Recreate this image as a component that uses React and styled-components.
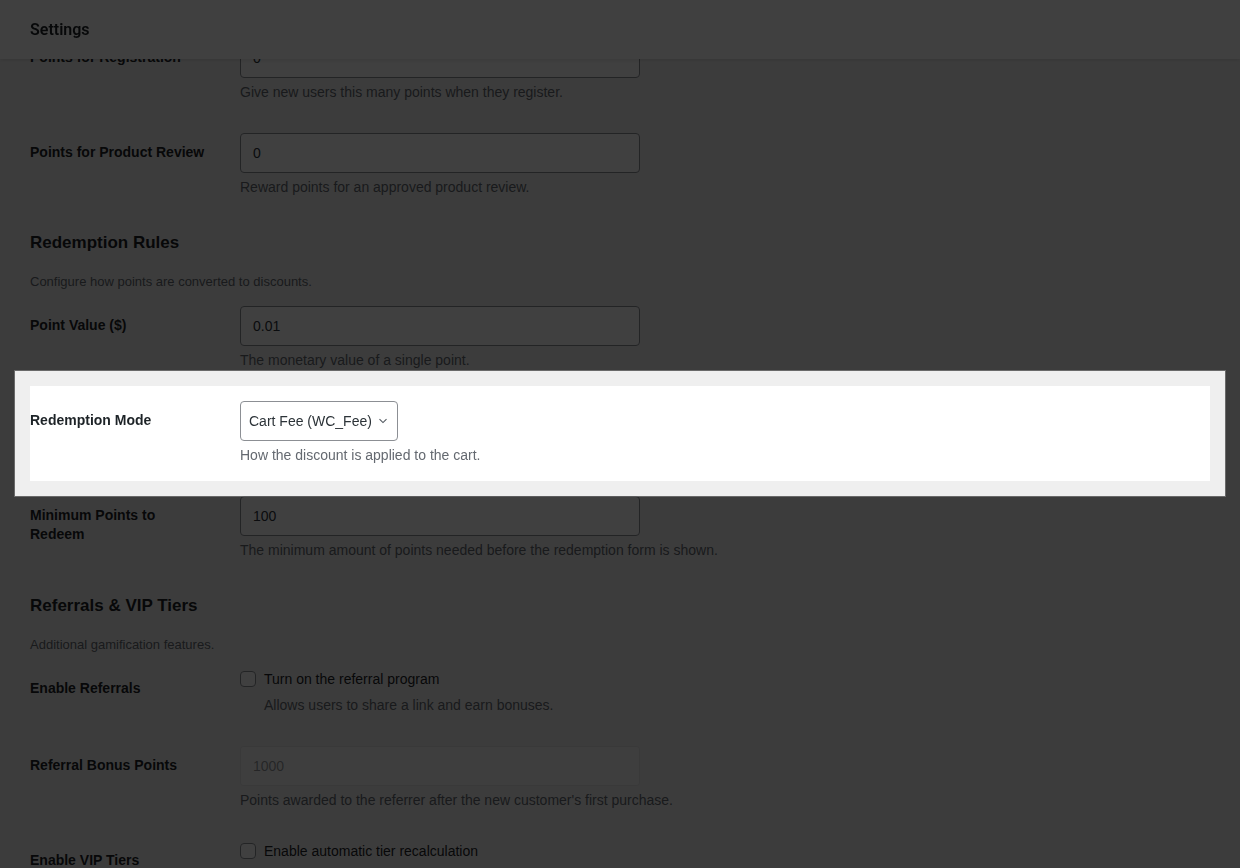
import styled, { createGlobalStyle } from 'styled-components'

const GlobalStyle = createGlobalStyle`
  html, body {
    margin: 0;
    padding: 0;
    overflow: hidden;
    background: #f0f0f0;
    font-family: "Liberation Sans", Arial, sans-serif;
    color: #1d2327;
  }
  * { box-sizing: border-box; }
`

const colors = {
  text: '#1d2327',
  input: '#2c3338',
  muted: '#646970',
  border: '#8c8f94',
}

const Header = styled.header`
  position: fixed;
  top: 0;
  left: 0;
  right: 0;
  z-index: 10;
  height: 59px;
  display: flex;
  align-items: center;
  padding: 0 30px;
  background: #fff;
  box-shadow: 0 1px 4px rgba(0, 0, 0, 0.12);
`

const HeaderTitle = styled.h1`
  margin: 0;
  font-family: Roboto, "Liberation Sans", sans-serif;
  font-size: 16px;
  font-weight: 600;
  color: ${colors.text};
`

const Main = styled.main`
  padding: 23px 30px 40px;
`

const Row = styled.div`
  display: grid;
  grid-template-columns: 210px 1fr;
  position: relative;
  ${({ $highlighted }) =>
    $highlighted &&
    `
    z-index: 20;
    background: #fff;
    box-shadow: 0 0 0 15px #efefef, 0 0 0 16px rgba(150, 150, 150, 0.5),
      0 0 0 9999px rgba(0, 0, 0, 0.75);
  `}
`

const Label = styled.div`
  padding-top: 25px;
  max-width: 178px;
  font-size: 14px;
  line-height: 19px;
  font-weight: 700;
  color: ${colors.text};
`

const Field = styled.div`
  padding: 15px 0;
`

const TextInput = styled.div`
  width: 400px;
  height: 40px;
  display: flex;
  align-items: center;
  padding: 0 12px;
  border: 1px solid ${({ $disabled }) => ($disabled ? 'rgba(220, 220, 222, 0.75)' : colors.border)};
  border-radius: 4px;
  background: ${({ $disabled }) => ($disabled ? 'rgba(255, 255, 255, 0.5)' : '#fff')};
  font-size: 14px;
  color: ${({ $disabled }) => ($disabled ? 'rgba(44, 51, 56, 0.5)' : colors.input)};
`

const SelectBox = styled.div`
  height: 40px;
  display: inline-flex;
  align-items: center;
  gap: 6px;
  padding: 0 9px 0 8px;
  border: 1px solid ${colors.border};
  border-radius: 4px;
  background: #fff;
  font-size: 14px;
  color: ${colors.input};
`

const Description = styled.p`
  margin: ${({ $gap }) => $gap || 4}px 0 0;
  padding-left: ${({ $indent }) => ($indent ? 24 : 0)}px;
  font-size: 14px;
  line-height: 21px;
  color: ${colors.muted};
`

const CheckLine = styled.label`
  display: flex;
  align-items: center;
  gap: 8px;
  height: 20px;
  font-size: 14px;
  color: ${colors.text};
`

const CheckBox = styled.span`
  width: 16px;
  height: 16px;
  border: 1px solid ${colors.border};
  border-radius: 4px;
  background: #fff;
  flex-shrink: 0;
`

const SectionTitle = styled.h2`
  margin: 19px 0 0;
  font-size: 17px;
  line-height: 22px;
  font-weight: 700;
  color: ${colors.text};
`

const SectionText = styled.p`
  margin: 18px 0 0;
  font-size: 13px;
  line-height: 19px;
  color: ${colors.muted};
`

function Chevron() {
  return (
    <svg width="10" height="6" viewBox="0 0 10 6" fill="none">
      <path d="M1.5 1.2 5 4.6l3.5-3.4" stroke="#50575e" strokeWidth="1.1" />
    </svg>
  )
}

function InputRow({ label, value, help, disabled, highlighted }) {
  return (
    <Row $highlighted={highlighted}>
      <Label>{label}</Label>
      <Field>
        <TextInput $disabled={disabled}>{value}</TextInput>
        <Description>{help}</Description>
      </Field>
    </Row>
  )
}

function CheckRow({ label, text, help }) {
  return (
    <Row>
      <Label>{label}</Label>
      <Field>
        <CheckLine>
          <CheckBox />
          {text}
        </CheckLine>
        {help && (
          <Description $indent $gap={6}>
            {help}
          </Description>
        )}
      </Field>
    </Row>
  )
}

export default function App() {
  return (
    <>
      <GlobalStyle />
      <Header>
        <HeaderTitle>Settings</HeaderTitle>
      </Header>
      <Main>
        <InputRow
          label="Points for Registration"
          value="0"
          help="Give new users this many points when they register."
        />
        <InputRow
          label="Points for Product Review"
          value="0"
          help="Reward points for an approved product review."
        />

        <SectionTitle>Redemption Rules</SectionTitle>
        <SectionText>Configure how points are converted to discounts.</SectionText>
        <InputRow
          label="Point Value ($)"
          value="0.01"
          help="The monetary value of a single point."
        />
        <Row $highlighted>
          <Label>Redemption Mode</Label>
          <Field>
            <SelectBox>
              <span>Cart Fee (WC_Fee)</span>
              <Chevron />
            </SelectBox>
            <Description>How the discount is applied to the cart.</Description>
          </Field>
        </Row>
        <InputRow
          label="Minimum Points to Redeem"
          value="100"
          help="The minimum amount of points needed before the redemption form is shown."
        />

        <SectionTitle>Referrals &amp; VIP Tiers</SectionTitle>
        <SectionText>Additional gamification features.</SectionText>
        <CheckRow
          label="Enable Referrals"
          text="Turn on the referral program"
          help="Allows users to share a link and earn bonuses."
        />
        <InputRow
          label="Referral Bonus Points"
          value="1000"
          disabled
          help="Points awarded to the referrer after the new customer's first purchase."
        />
        <CheckRow label="Enable VIP Tiers" text="Enable automatic tier recalculation" />
      </Main>
    </>
  )
}
